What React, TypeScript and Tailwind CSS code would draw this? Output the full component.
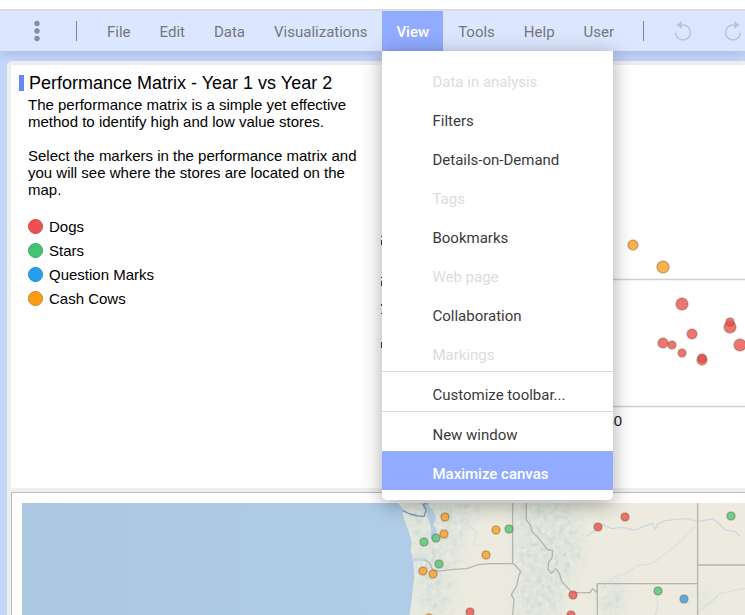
const menus = ["File", "Edit", "Data", "Visualizations", "View", "Tools", "Help", "User"];

interface MenuEntry {
  label: string;
  disabled?: boolean;
  active?: boolean;
}

const viewGroups: MenuEntry[][] = [
  [
    { label: "Data in analysis", disabled: true },
    { label: "Filters" },
    { label: "Details-on-Demand" },
    { label: "Tags", disabled: true },
    { label: "Bookmarks" },
    { label: "Web page", disabled: true },
    { label: "Collaboration" },
    { label: "Markings", disabled: true },
  ],
  [{ label: "Customize toolbar..." }],
  [{ label: "New window" }, { label: "Maximize canvas", active: true }],
];

const legend = [
  { label: "Dogs", dot: "bg-[#f04f50] border-[#c8484a]" },
  { label: "Stars", dot: "bg-[#43c673] border-[#3a9f60]" },
  { label: "Question Marks", dot: "bg-[#25a0ee] border-[#2784c2]" },
  { label: "Cash Cows", dot: "bg-[#fc9c14] border-[#c98320]" },
];

const RED = "#ec4d50";
const GREEN = "#45c878";
const BLUE = "#2a9df0";
const ORANGE = "#fb9c1c";

// x, y, radius, colour
type Marker = [number, number, number, string];

const stores: Marker[] = [
  [263, 180, 5, ORANGE],
  [293, 202, 6, ORANGE],
  [312, 239, 6, RED],
  [322, 269, 5, RED],
  [293, 278, 5, RED],
  [302, 280, 4, RED],
  [312, 288, 4, RED],
  [332, 295, 5, RED],
  [332, 293, 4, RED],
  [360, 262, 6, RED],
  [360, 257, 4, RED],
  [370, 280, 6, RED],
];

const pins: Marker[] = [
  [423, 14, 4, ORANGE],
  [422, 31, 4, ORANGE],
  [474, 27, 4, ORANGE],
  [464, 52, 4, ORANGE],
  [401, 68, 4, ORANGE],
  [411, 71, 4, ORANGE],
  [407, 115, 4, ORANGE],
  [402, 39, 4, GREEN],
  [414, 35, 4, GREEN],
  [417, 61, 4, GREEN],
  [487, 26, 4, GREEN],
  [636, 88, 4, GREEN],
  [709, 13, 4, GREEN],
  [662, 96, 4, BLUE],
  [603, 14, 4, RED],
  [576, 24, 4, RED],
  [551, 92, 4, RED],
  [549, 112, 4, RED],
  [448, 109, 4, RED],
];

function Markers({ items }: { items: Marker[] }) {
  return (
    <g fillOpacity="0.78" stroke="#7a4a20" strokeOpacity="0.35" strokeWidth="1.6">
      {items.map(([x, y, r, color]) => (
        <circle key={`${x}-${y}`} cx={x} cy={y} r={r} fill={color} />
      ))}
    </g>
  );
}

function ViewMenu() {
  return (
    <div className="absolute left-0 top-full z-20 w-[231px] rounded-b-[5px] bg-white pb-[10px] pt-2 shadow-[0_4px_20px_rgba(0,0,0,0.35)]">
      {viewGroups.map((group, i) => (
        <ul key={i} className={i > 0 ? "border-t border-[#dcdcdc]" : ""}>
          {group.map((entry) => (
            <li key={entry.label}>
              <button
                disabled={entry.disabled}
                className={`flex h-[39px] w-full items-center pl-[50px] pt-2 text-left text-[15px] ${
                  entry.active
                    ? "bg-[#90abff] font-medium text-white"
                    : entry.disabled
                      ? "text-[#dcdcdc]"
                      : "text-[#3a3a3a]"
                }`}
              >
                {entry.label}
              </button>
            </li>
          ))}
        </ul>
      ))}
    </div>
  );
}

function HistoryIcon({ flip = false }: { flip?: boolean }) {
  return (
    <svg width="20" height="22" viewBox="0 0 20 22" className={flip ? "-scale-x-100" : ""}>
      <path d="M2.5 12.5A7.5 7.5 0 1 0 10 5H8" fill="none" stroke="#b9c4dc" strokeWidth="1.5" />
      <path d="M3.5 5L9 1v8z" fill="#b9c4dc" />
    </svg>
  );
}

function MenuBar() {
  return (
    <header className="relative z-10 flex h-[42px] items-center border-t-2 border-[#dcdcdc] bg-[#dce6fe] font-[Roboto,sans-serif] shadow-[0_2px_12px_rgba(90,110,170,0.3)]">
      <button aria-label="More" className="ml-[33px] shrink-0">
        <svg width="8" height="22" viewBox="0 0 8 22" fill="#858e9c">
          <circle cx="4" cy="3.5" r="2.7" />
          <circle cx="4" cy="11" r="2.7" />
          <circle cx="4" cy="18.5" r="2.7" />
        </svg>
      </button>
      <span className="ml-[35px] mr-4 h-5 w-px shrink-0 bg-[#7e8794]" />
      <nav className="flex h-full gap-px">
        {menus.map((m) => (
          <div key={m} className="relative h-full">
            <button
              className={`h-full px-[14px] pt-0.5 text-[15px] ${
                m === "View" ? "bg-[#90abff] font-medium text-white" : "text-[#74777c]"
              }`}
            >
              {m}
            </button>
            {m === "View" && <ViewMenu />}
          </div>
        ))}
      </nav>
      <span className="ml-[15px] h-5 w-px shrink-0 bg-[#7e8794]" />
      <button aria-label="Undo" disabled className="ml-[29px] shrink-0">
        <HistoryIcon />
      </button>
      <button aria-label="Redo" disabled className="ml-[30px] shrink-0">
        <HistoryIcon flip />
      </button>
    </header>
  );
}

function MatrixChart() {
  return (
    <svg
      viewBox="0 0 375 423"
      preserveAspectRatio="xMinYMin slice"
      className="h-[423px] min-w-0 flex-1"
      role="img"
      aria-label="Performance matrix"
    >
      <path d="M30 214.5h345M30 341.5h345" stroke="#cfcfcf" strokeWidth="1.4" />
      {/* axis label edges left of the open menu */}
      <path
        d="M11 171h1v1h-1zM11 175h1v5h-1zM11 212h1v1h-1zM11 216h1v5h-1zM11 239h1v2h-1zM11 248h1v1h-1zM11 277h1v6h-1z"
        fill="#6b2a35"
      />
      <text x="252" y="361" textAnchor="end" fontSize="15" fill="#222">
        60
      </text>
      <Markers items={stores} />
    </svg>
  );
}

function StoreMap() {
  return (
    <svg
      viewBox="0 0 723 112"
      preserveAspectRatio="xMinYMin slice"
      className="min-h-[112px] w-full flex-1"
      role="img"
      aria-label="Store map"
    >
      <defs>
        <linearGradient id="sea" x1="0" x2="1" y1="0" y2="0">
          <stop offset="0" stopColor="#abc7e1" />
          <stop offset="0.5" stopColor="#b0cde7" />
        </linearGradient>
        <filter id="relief" x="0" y="0" width="100%" height="100%" colorInterpolationFilters="sRGB">
          <feTurbulence type="fractalNoise" baseFrequency="0.06" numOctaves="3" seed="4" />
          <feColorMatrix values="0 0 0 0 0.66  0 0 0 0 0.72  0 0 0 0 0.71  2.6 0 0 0 -1.2" />
        </filter>
        <filter id="highlights" x="0" y="0" width="100%" height="100%" colorInterpolationFilters="sRGB">
          <feTurbulence type="fractalNoise" baseFrequency="0.07" numOctaves="3" seed="11" />
          <feColorMatrix values="0 0 0 0 1  0 0 0 0 1  0 0 0 0 1  0 3 0 0 -1.5" />
        </filter>
        <filter id="soft" x="-30%" y="-30%" width="160%" height="160%">
          <feGaussianBlur stdDeviation="22" />
        </filter>
        <clipPath id="land">
          <path d="M80 216L100 236 98 252 106 274 116 302 126 340 122 362 130 390 133 440 126 500 118 560H1140V216z" />
        </clipPath>
        <mask id="hills">
          <g filter="url(#soft)" fill="#fff">
            <path d="M90 200H300L345 240 290 290 270 370 250 390 240 560H150L120 350z" />
            <path d="M430 200H610L630 290 640 380 600 450 560 560H430L450 420 430 400z" />
            <path d="M690 465L740 440 765 480 760 560H690z" />
            <path d="M985 490h35v50h-35z" />
          </g>
        </mask>
      </defs>
      <rect width="723" height="112" fill="url(#sea)" />
      <g transform="translate(348 -73) scale(0.3333)" fill="none" strokeLinejoin="round">
        <g clipPath="url(#land)">
          <path d="M60 210h1080v360H60z" fill="#edebdf" />
          <g mask="url(#hills)">
            <path d="M60 210h1080v360H60z" fill="#dfe5dc" />
            <rect x="60" y="210" width="1080" height="360" filter="url(#relief)" opacity="0.3" />
            <rect x="60" y="210" width="1080" height="360" filter="url(#highlights)" opacity="0.35" />
          </g>
        </g>
        <path
          d="M145 216L160 228 170 250 178 275 184 300 182 330 192 318 196 335 200 300 190 285 198 262 188 240 176 228 178 216z"
          fill="#b4cfe4"
        />
        <path d="M125 383h38l12 8-12 3h-38z" fill="#c3d6e3" />
        <g stroke="#cdd9e1" strokeWidth="4">
          <path d="M650 320L672 304 700 284 725 296 755 292 795 300 820 290 848 280 856 298 862 284 885 272 920 268 955 266 980 274 1010 270 1030 266 1050 284 1066 300 1095 304 1110 318" />
          <path
            d="M700 470L735 440 770 430 800 408 850 400 880 376 910 354 940 326 975 290"
            opacity="0.6"
          />
          <path d="M985 545L1030 510 1050 490 1125 475M860 500l4 30-8 25" opacity="0.6" />
          <path d="M300 290L320 305 310 340 330 350M280 390L240 402" opacity="0.5" />
        </g>
        <path d="M98 242L120 252 145 258 162 260 168 240 160 224 174 216" stroke="#7f97b8" strokeWidth="4" />
        <g stroke="#b4b5b0" strokeWidth="4">
          <path d="M165 390L180 400 186 416 200 424 250 418 290 416 325 404 360 401H428" />
          <path d="M428 216V400L438 408 452 424 446 440 440 468 424 494 432 508 428 556" />
          <path d="M469 216V270L482 286 486 304 502 320 532 358 548 362 546 384 536 396 534 418 544 430 558 416 568 430 576 456 590 470 606 488H660L668 476 682 488V461" />
          <path d="M682 556V461H983M983 216V556M983 405H1140" />
        </g>
      </g>
      <Markers items={pins} />
    </svg>
  );
}

export default function App() {
  return (
    <div className="flex min-h-screen flex-col overflow-hidden border-t-[9px] border-white bg-[#c5d6fb]">
      <MenuBar />
      <main className="ml-[7px] mt-[10px] flex flex-1 flex-col rounded-tl-[5px] bg-[#efefef] pl-1 pt-1 font-['Liberation_Sans',Arial,sans-serif] text-black">
        <section className="flex min-h-[423px] bg-white">
          <div className="w-[359px] shrink-0 pl-2 pt-[7px]">
            <h1 className="flex items-center gap-[5px] text-[18px] leading-[22px]">
              <span className="h-4 w-[5px] bg-[#6488fb]" />
              Performance Matrix - Year 1 vs Year 2
            </h1>
            <div className="ml-[9px] mt-0.5 text-[15px] leading-[17px]">
              <p>The performance matrix is a simple yet effective method to identify high and low value stores.</p>
              <p className="mt-[17px]">
                Select the markers in the performance matrix and you will see where the stores are located on the map.
              </p>
              <ul className="mt-4">
                {legend.map(({ label, dot }) => (
                  <li key={label} className="flex h-6 items-center gap-[6px]">
                    <span className={`h-[15px] w-[15px] rounded-full border ${dot}`} />
                    {label}
                  </li>
                ))}
              </ul>
            </div>
          </div>
          <MatrixChart />
        </section>
        <section className="mt-1 flex flex-1 flex-col border-l border-t border-[#bdbdbd] bg-white pl-[10px] pt-[10px]">
          <StoreMap />
        </section>
      </main>
    </div>
  );
}
